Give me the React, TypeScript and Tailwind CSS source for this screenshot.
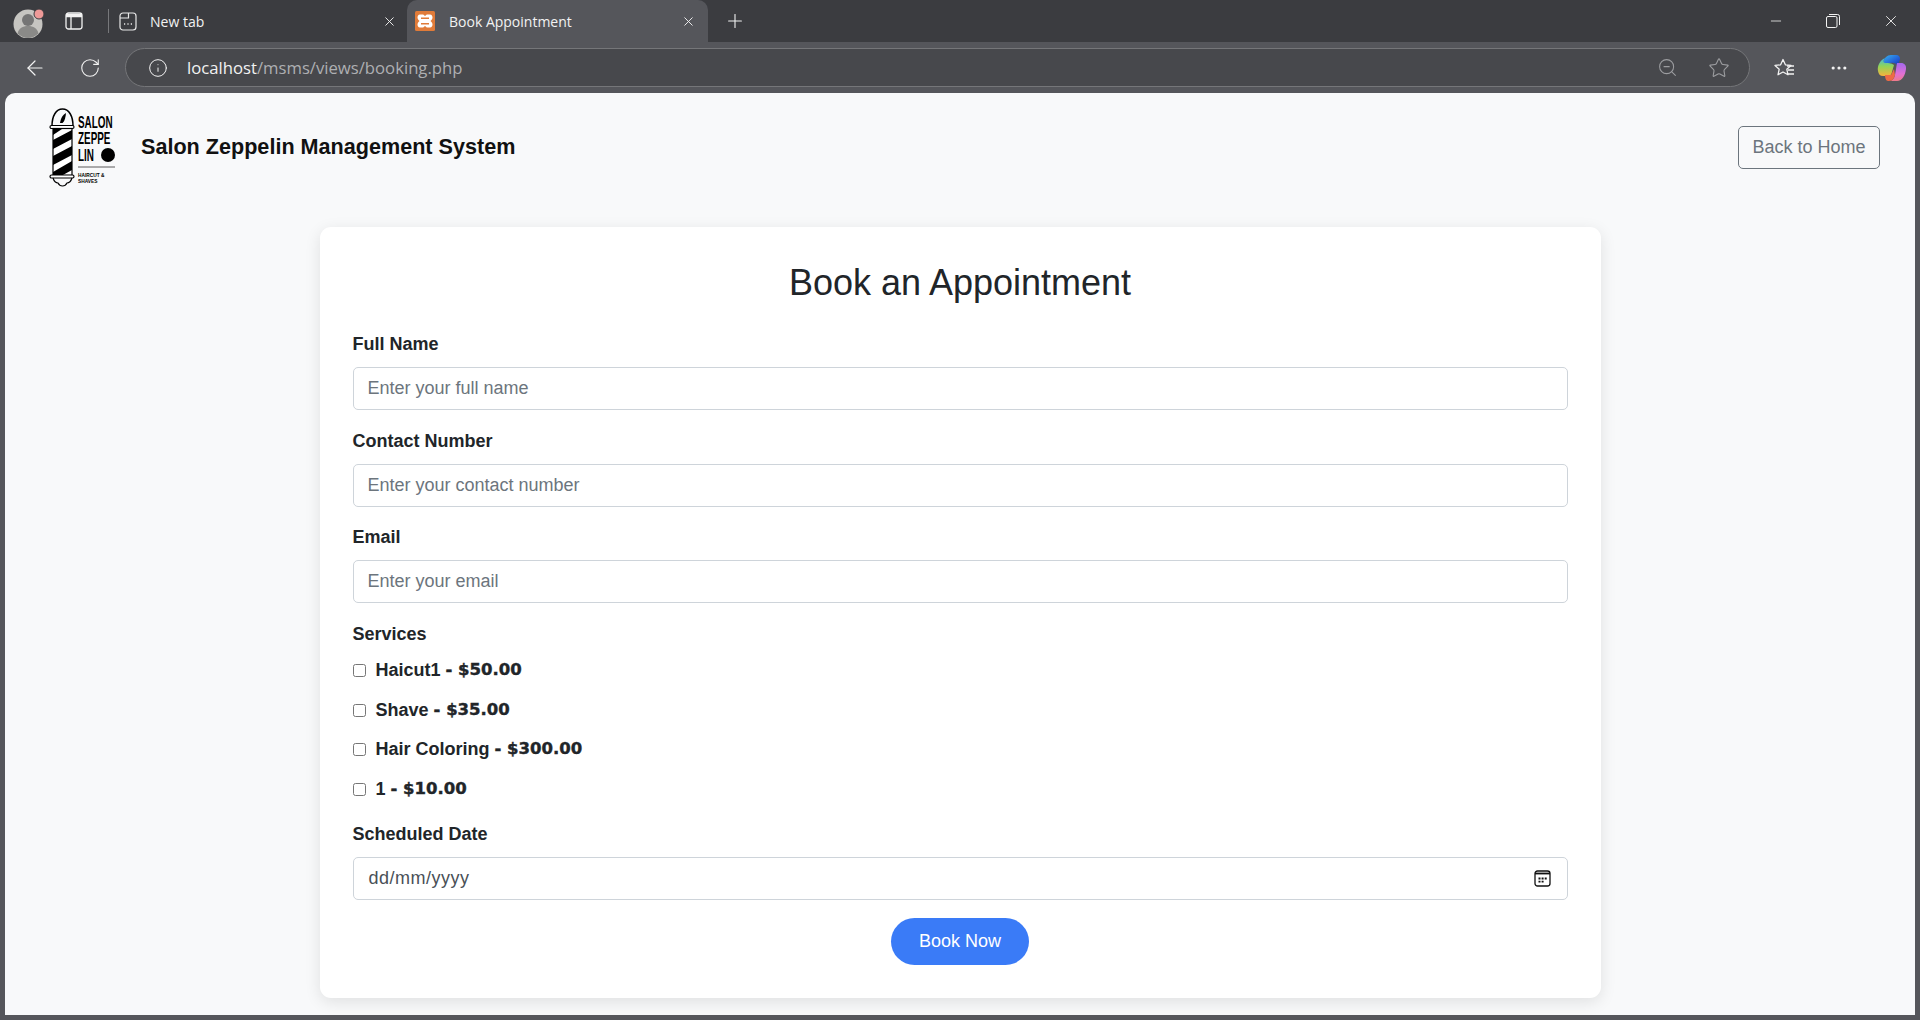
import { ArrowLeft, Info, Minus, MoreHorizontal, Plus, RotateCw, Star, X, ZoomOut } from "lucide-react";

const fields = [
  { label: "Full Name", placeholder: "Enter your full name" },
  { label: "Contact Number", placeholder: "Enter your contact number" },
  { label: "Email", placeholder: "Enter your email" },
];

const services = [
  { name: "Haicut1", price: "- $50.00" },
  { name: "Shave", price: "- $35.00" },
  { name: "Hair Coloring", price: "- $300.00" },
  { name: "1", price: "- $10.00" },
];

function Avatar() {
  return (
    <svg width="34" height="34" viewBox="0 0 34 34" className="ml-[11px] shrink-0">
      <circle cx="17" cy="20" r="14.500" fill="#c6c5c1" />
      <circle cx="17" cy="16" r="6" fill="#757575" />
      <path d="M6.500 29.500c1.500-5.500 5-7.500 10.500-7.500s9 2 10.500 7.500c-3 2.500-6.500 4.500-10.500 4.500s-7.500-2-10.500-4.500z" fill="#8a8a88" />
      <circle cx="28" cy="10" r="5" fill="#ee9a98" stroke="#3b3c40" strokeWidth="1" />
    </svg>
  );
}

function SidebarIcon() {
  return (
    <svg width="18" height="18" viewBox="0 0 18 18" fill="none" stroke="#f2f2f2" strokeWidth="1.300" className="ml-[20px] shrink-0">
      <rect x="1" y="1" width="16" height="16" rx="2.500" />
      <path d="M1 3.500h16" strokeWidth="3.500" />
      <path d="M6 5v12" />
    </svg>
  );
}

function NewTabIcon() {
  return (
    <svg width="18" height="19" viewBox="0 0 18 19" fill="none" stroke="#e8e8e8" strokeWidth="1.200" className="shrink-0">
      <rect x="1" y="1" width="16" height="17" rx="3" />
      <path d="M1 6h8.500V1" />
      <path d="M5 12h1.200M8.400 12h1.200M11.800 12h1.200" strokeWidth="1.600" />
    </svg>
  );
}

function XamppIcon() {
  return (
    <svg width="20" height="20" viewBox="0 0 20 20" className="shrink-0">
      <rect width="20" height="20" rx="1.500" fill="#e07b39" />
      <path d="M5 3.500h3.200l1.800 1.500 1.800-1.500H15c1.800 0 2.500 1.500 2.500 3 0 1.500-1 2.500-2 3.500 1 1 2 2 2 3.500 0 1.500-.7 3-2.500 3h-3.200L10 15l-1.800 1.500H5c-1.800 0-2.500-1.500-2.500-3 0-1.500 1-2.500 2-3.500-1-1-2-2-2-3.500 0-1.500.7-3 2.500-3z" fill="#fff" />
      <path d="M6 6.500h8v1.500H6zM6 12h8v1.500H6z" fill="#e07b39" />
    </svg>
  );
}

function RestoreIcon() {
  return (
    <svg width="14" height="14" viewBox="0 0 14 14" fill="none" stroke="#f2f2f2" strokeWidth="1">
      <rect x="0.500" y="2.500" width="10.500" height="11" rx="1.500" />
      <path d="M3 .5h8.500a2 2 0 0 1 2 2V11" />
    </svg>
  );
}

function FavoritesIcon() {
  return (
    <svg width="22" height="20" viewBox="0 0 22 20" fill="none" stroke="#f2f2f2" strokeWidth="1.300">
      <path d="M10 1.500l2.400 5.300 5.600.6-4.200 3.800 1.200 5.600L10 14l-5 2.800L6.200 11.200 2 7.400l5.600-.6z" strokeLinejoin="round" fill="#55565b" />
      <path d="M14 8h7M15 12h6M15 16h6" />
    </svg>
  );
}

function CopilotIcon() {
  return (
    <svg width="30" height="28" viewBox="0 0 30 28">
      <defs>
        <linearGradient id="copilotBlue" x1="0" y1="0" x2="1" y2="1">
          <stop offset="0" stopColor="#38b6f0" />
          <stop offset="0.6" stopColor="#2360d8" />
          <stop offset="1" stopColor="#1b2fa8" />
        </linearGradient>
        <linearGradient id="copilotPink" x1="0" y1="0" x2="0" y2="1">
          <stop offset="0" stopColor="#a468ee" />
          <stop offset="0.6" stopColor="#e070d4" />
          <stop offset="1" stopColor="#f07a8a" />
        </linearGradient>
        <linearGradient id="copilotGreen" x1="0" y1="0" x2="0" y2="1">
          <stop offset="0" stopColor="#3fb5e8" />
          <stop offset="0.45" stopColor="#8fd45a" />
          <stop offset="1" stopColor="#f7b23c" />
        </linearGradient>
      </defs>
      <path d="M6 8c1.500-4 4-7 8-7h5c3 0 4 2 4 4l-2 7c-2-3-5-4-8-3-3 1-5 1-7-1z" fill="url(#copilotBlue)" />
      <path d="M20 9h4c3.500 0 5.500 2.500 5 6-.8 6-3.500 12-9 12h-8c3 0 5-2 6-6z" fill="url(#copilotPink)" />
      <path d="M8 4C3 6 0 12 1 17c.500 3 2 5 5 5h5c2 0 3.500-1.500 4-4l2-7c-3-2-6-2-8-2-2 0-4-1-1-5z" fill="url(#copilotGreen)" />
      <path d="M8 21h6l3-6 1 6c-.800 3-2.500 6-6 6h-1c-2 0-3-3-3-6z" fill="#ee6a45" />
    </svg>
  );
}

function Logo() {
  return (
    <svg width="70" height="82" viewBox="0 0 70 82" className="shrink-0">
      <path d="M4 21c0-10 4-17 10.500-17S25 11 25 21" fill="none" stroke="#000" strokeWidth="1.500" />
      <path d="M12 18c1-6 3-8 6-10-.500 4-1 8-3.500 10z" fill="#000" />
      <rect x="2" y="20.500" width="24" height="3" rx="1.500" fill="#fff" stroke="#000" strokeWidth="1.200" />
      <rect x="5" y="23.500" width="19" height="47" fill="#fff" stroke="#000" strokeWidth="1.200" />
      <path d="M5 24h9L5 30zM24 25v9L5 44v-9zM24 41v9L5 60v-9zM24 56v9l-10 5.500H5V67z" fill="#000" />
      <rect x="2" y="70" width="24" height="3" rx="1.500" fill="#fff" stroke="#000" strokeWidth="1.200" />
      <path d="M5 73c1 3 3 5 5 5 1 2 3 3 4.500 3s3.500-1 4.500-3c2 0 4-2 5-5" fill="none" stroke="#000" strokeWidth="1.200" />
      <g fontFamily="'Liberation Sans', Arial, sans-serif" fontWeight="700" fill="#000">
        <text x="0" y="0" fontSize="16.500" transform="translate(30 23) scale(0.6 1)">SALON</text>
        <text x="0" y="0" fontSize="16.500" transform="translate(30 39) scale(0.6 1)">ZEPPE</text>
        <text x="0" y="0" fontSize="16.500" transform="translate(30 56) scale(0.6 1)">LIN</text>
        <text x="30" y="72" fontSize="4.800">HAIRCUT &amp;</text>
        <text x="30" y="78" fontSize="4.800">SHAVES</text>
      </g>
      <circle cx="60" cy="50" r="7" fill="#000" />
      <path d="M30 62h37" stroke="#333" strokeWidth="0.800" />
    </svg>
  );
}

function CalendarIcon() {
  return (
    <svg width="17" height="17" viewBox="0 0 17 17" fill="none" stroke="#111" strokeWidth="1.300">
      <rect x="1" y="1" width="15" height="15" rx="2.500" />
      <path d="M1 3.500h15" strokeWidth="1.800" />
      <path d="M4.500 8.500h2M7.600 8.500h2M10.700 8.500h2M4.500 11.700h2M7.600 11.700h2" strokeWidth="1.800" />
    </svg>
  );
}

export default function App() {
  return (
    <div className="flex h-[1020px] w-[1920px] flex-col overflow-hidden bg-[#55565b] font-['Liberation_Sans',Arial,sans-serif] text-[#212529]">
      {/* browser tabs */}
      <div className="flex h-[42px] shrink-0 items-center bg-[#3b3c40] font-['Open_Sans',sans-serif] text-[14px] text-[#f2f2f2]">
        <Avatar />
        <SidebarIcon />
        <div className="ml-[25px] h-[24px] w-px bg-[#77787b]" />
        <div className="ml-[10px] flex w-[279px] items-center">
          <NewTabIcon />
          <span className="ml-[13px] flex-1">New tab</span>
          <X size={15} strokeWidth={1.500} className="mr-[1px]" />
        </div>
        <div className="ml-[9px] flex h-full w-[301px] items-center rounded-t-[10px] bg-[#55565b] pl-[8px]">
          <XamppIcon />
          <span className="ml-[14px] flex-1">Book Appointment</span>
          <X size={15} strokeWidth={1.500} className="mr-[12px]" />
        </div>
        <Plus size={22} strokeWidth={1.200} className="ml-[16px]" />
        <div className="ml-auto flex items-center">
          <Minus size={16} strokeWidth={1.200} className="mr-[42px]" />
          <RestoreIcon />
          <X size={18} strokeWidth={1.200} className="mr-[20px] ml-[42px]" />
        </div>
      </div>

      {/* browser toolbar */}
      <div className="flex h-[51px] shrink-0 items-center text-[#f2f2f2]">
        <ArrowLeft size={24} strokeWidth={1.200} className="ml-[23px]" />
        <RotateCw size={22} strokeWidth={1.200} className="ml-[32px]" />
        <div className="ml-[24px] flex h-[39px] w-[1625px] items-center rounded-full border border-[#757679] bg-[#47484c] pl-[22px] pr-[14px]">
          <Info size={20} strokeWidth={1.200} />
          <span className="ml-[19px] flex-1 font-['Open_Sans',sans-serif] text-[16.700px]">
            localhost<span className="text-[#aeafb2]">/msms/views/booking.php</span>
          </span>
          <ZoomOut size={21} strokeWidth={1.200} className="mr-[30px] text-[#9c9da0]" />
          <Star size={22} strokeWidth={1.200} className="mr-[5px] text-[#9c9da0]" />
        </div>
        <div className="ml-[23px]">
          <FavoritesIcon />
        </div>
        <MoreHorizontal size={20} strokeWidth={1.800} className="ml-[34px]" />
        <div className="ml-[28px]">
          <CopilotIcon />
        </div>
      </div>

      {/* page */}
      <div className="mx-[5px] h-[922px] shrink-0 overflow-hidden rounded-t-[10px] bg-[#f8f9fa]">
        <nav className="flex h-[106px] items-center justify-between pr-[35px] pl-[43px]">
          <div className="flex items-center">
            <Logo />
            <span className="mt-[2px] ml-[23px] text-[21.600px] font-bold text-[#111]">Salon Zeppelin Management System</span>
          </div>
          <button type="button" className="mt-[2px] h-[43px] w-[142px] rounded-[5px] border border-[#6c757d] text-[18px] text-[#6c757d]">
            Back to Home
          </button>
        </nav>

        <form className="mx-auto mt-[28px] h-[771px] w-[1281px] rounded-[11px] bg-white px-[33px] pt-[35px] shadow-[0_4px_16px_rgba(0,0,0,0.1)]">
          <h2 className="mb-[27px] text-center text-[36px] leading-[42px] text-[#212529]">Book an Appointment</h2>

          {fields.map((field) => (
            <div key={field.label} className="mb-[17.600px]">
              <label className="mb-[10px] block text-[18px] leading-[26px] font-bold">{field.label}</label>
              <input
                type="text"
                placeholder={field.placeholder}
                className="h-[43px] w-full rounded-[5px] border border-[#ced4da] bg-white px-[14px] text-[18px] placeholder:text-[#6c757d]"
              />
            </div>
          ))}

          <div className="mb-[11px] text-[18px] leading-[26px] font-bold">Services</div>
          {services.map((service) => (
            <label key={service.name} className="mb-[13.500px] flex h-[26px] items-center text-[18px] font-bold">
              <input type="checkbox" className="h-[13px] w-[13px] appearance-none rounded-[2.500px] border border-[#767676] bg-white" />
              <span className="ml-[10px]">{service.name}</span>
              <span className="ml-[5px] font-['DejaVu_Sans',sans-serif] text-[16.500px] [-webkit-text-stroke:0.4px_#212529]">{service.price}</span>
            </label>
          ))}

          <label className="mt-[18.500px] mb-[10px] block text-[18px] leading-[26px] font-bold">Scheduled Date</label>
          <div className="flex h-[43px] w-full items-center justify-between rounded-[5px] border border-[#ced4da] pr-[16px] pl-[15px] text-[18px] tracking-[0.500px] text-[#495057]">
            <span>dd/mm/yyyy</span>
            <CalendarIcon />
          </div>

          <div className="mt-[18px] flex justify-center">
            <button type="button" className="h-[47px] w-[138px] rounded-full bg-[#3a7bf7] text-[18px] text-white">
              Book Now
            </button>
          </div>
        </form>
      </div>
    </div>
  );
}
